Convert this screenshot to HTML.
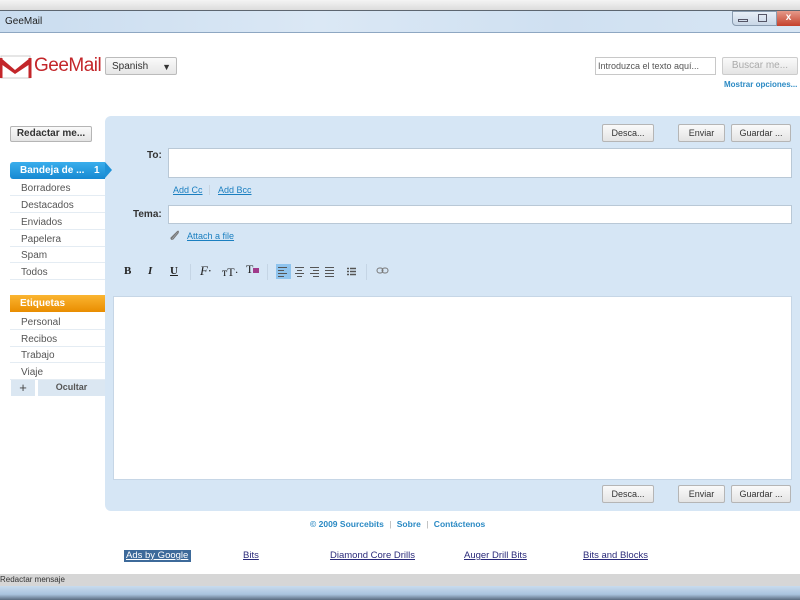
<!DOCTYPE html>
<html><head><meta charset="utf-8"><style>
*{margin:0;padding:0;box-sizing:border-box}
body{width:800px;height:600px;overflow:hidden;background:#fff;font-family:"Liberation Sans",sans-serif;font-size:10px;color:#333;position:relative}
.a{position:absolute}
.btn{position:absolute;border:1px solid #b5b5b5;border-radius:2px;background:linear-gradient(#fafafa,#e4e4e4);text-align:center;font-size:9px;color:#333;line-height:16px}
.nav{position:absolute;left:10px;width:95px;height:17px;border-bottom:1px solid #e4ecf3;padding-left:11px;line-height:19px;font-size:10px;color:#555}
.lnk{color:#1a7fc0;text-decoration:underline;font-size:9px}
.inp{position:absolute;background:#fff;border:1px solid #b9c8d6}
.tb{position:absolute;top:265px;font-size:11px;font-weight:bold;color:#222;font-family:"Liberation Serif",serif}
.ad{position:absolute;top:550px;color:#2a2a7a;text-decoration:underline;font-size:9.5px}
</style></head><body>
<div class="a" style="left:0;top:0;width:800px;height:10px;background:linear-gradient(#f4f4f4,#dcdcdc)"></div>
<div class="a" style="left:0;top:10px;width:800px;height:23px;background:linear-gradient(90deg,#c9dcef,#dbe8f5 40%,#cfe0f1 70%,#d8e6f4);border-top:1px solid #5d6670;border-bottom:1px solid #8ea7c2"></div>
<div class="a" style="left:5px;top:16px;font-size:10px;color:#222">GeeMail</div>
<div class="a" style="left:732px;top:11px;width:45px;height:15px;border:1px solid #8a9cb0;border-radius:0 0 0 4px;background:linear-gradient(#e8eff7,#c8d6e6)"></div>
<div class="a" style="left:738px;top:19px;width:10px;height:3px;border:1px solid #556"></div>
<div class="a" style="left:758px;top:14px;width:9px;height:8px;border:1px solid #556"></div>
<div class="a" style="left:777px;top:11px;width:23px;height:15px;background:linear-gradient(#e59a8a,#c4412c);color:#fff;font-size:10px;font-weight:bold;text-align:center;line-height:14px">x</div>
<svg class="a" style="left:0;top:50px" width="34" height="34" viewBox="0 0 34 34"><path d="M1 6 L30 6 L30 28 L1 28Z" fill="#fff" stroke="#ccc"/><path d="M1 8 L15 20 L30 8 L30 14 L15 24 L1 14Z" fill="#c3262a"/><path d="M1 8 V28 M30 8 V28" stroke="#c3262a" stroke-width="3"/></svg>
<div class="a" style="left:34px;top:55px;font-size:19px;color:#c3262a;letter-spacing:-0.5px">GeeMail</div>
<div class="a" style="left:105px;top:57px;width:72px;height:18px;border:1px solid #bbb;border-radius:2px;background:linear-gradient(#fafafa,#e6e6e6);font-size:10px;line-height:18px;padding-left:6px">Spanish<span style="position:absolute;right:5px;font-size:9px">▼</span></div>
<div class="inp" style="left:595px;top:57px;width:121px;height:18px;border-color:#c8c8c8;font-size:9px;color:#555;line-height:17px;padding-left:2px">Introduzca el texto aquí...</div>
<div class="btn" style="left:722px;top:57px;width:76px;height:18px;color:#aaa;font-size:10px;border-color:#ccc">Buscar me...</div>
<div class="a" style="left:724px;top:80px;font-size:8px;font-weight:bold;color:#2b8ac4">Mostrar opciones...</div>
<div class="a" style="left:105px;top:116px;width:700px;height:395px;background:#d6e6f5;border-radius:6px"></div>
<div class="btn" style="left:10px;top:126px;width:82px;height:16px;font-weight:bold;font-size:10px;line-height:14px">Redactar me...</div>
<div class="a" style="left:10px;top:162px;width:95px;height:17px;background:linear-gradient(#3aaeec,#1689d2);border-radius:3px 0 0 3px;color:#fff;font-weight:bold;font-size:10px;line-height:17px;padding-left:10px">Bandeja de ...<span style="position:absolute;left:84px">1</span></div>
<div class="a" style="left:105px;top:162px;width:0;height:0;border-top:8.5px solid transparent;border-bottom:8.5px solid transparent;border-left:7px solid #1f92d8"></div>
<div class="nav" style="top:179px">Borradores</div>
<div class="nav" style="top:196px">Destacados</div>
<div class="nav" style="top:213px">Enviados</div>
<div class="nav" style="top:230px">Papelera</div>
<div class="nav" style="top:246px">Spam</div>
<div class="nav" style="top:263px">Todos</div>
<div class="a" style="left:10px;top:295px;width:95px;height:17px;background:linear-gradient(#fbb531,#e98d00);color:#fff;font-weight:bold;font-size:10px;line-height:17px;padding-left:10px">Etiquetas</div>
<div class="nav" style="top:313px">Personal</div>
<div class="nav" style="top:330px">Recibos</div>
<div class="nav" style="top:346px">Trabajo</div>
<div class="nav" style="top:363px">Viaje</div>
<div class="a" style="left:11px;top:380px;width:24px;height:16px;background:#dbe7f2;text-align:center;font-size:13px;line-height:15px;color:#444">+</div>
<div class="a" style="left:38px;top:380px;width:67px;height:16px;background:#dbe7f2;text-align:center;font-size:9px;font-weight:bold;line-height:15px;color:#555">Ocultar</div>
<div class="btn" style="left:602px;top:124px;width:52px;height:18px">Desca...</div>
<div class="btn" style="left:678px;top:124px;width:47px;height:18px">Enviar</div>
<div class="btn" style="left:731px;top:124px;width:60px;height:18px">Guardar ...</div>
<div class="a" style="left:147px;top:150px;font-weight:bold;font-size:10px">To:</div>
<div class="inp" style="left:168px;top:148px;width:624px;height:30px"></div>
<div class="a lnk" style="left:173px;top:185px">Add Cc</div>
<div class="a" style="left:209px;top:185px;width:1px;height:10px;background:#c8d4e0"></div>
<div class="a lnk" style="left:218px;top:185px">Add Bcc</div>
<div class="a" style="left:133px;top:209px;font-weight:bold;font-size:10px">Tema:</div>
<div class="inp" style="left:168px;top:205px;width:624px;height:19px"></div>
<svg class="a" style="left:168px;top:229px" width="12" height="12"><path d="M3 10 L9 3 Q11 1 10 4 L5 10 Q3 11 3 9 L8 4" stroke="#777" fill="none" stroke-width="1.2"/></svg>
<div class="a lnk" style="left:187px;top:231px">Attach a file</div>
<div class="tb" style="left:124px">B</div>
<div class="tb" style="left:148px;font-style:italic">I</div>
<div class="tb" style="left:170px;text-decoration:underline">U</div>
<div class="a" style="left:190px;top:264px;width:1px;height:16px;background:#c5d5e5"></div>
<div class="tb" style="left:200px;font-style:italic;font-weight:normal;font-size:13px;top:263px">F·</div>
<div class="tb" style="left:222px;font-weight:normal;font-size:12px">тT·</div>
<div class="tb" style="left:246px;font-weight:normal;font-size:12px;top:262px">T<span style="display:inline-block;width:6px;height:5px;background:#a03a8a"></span></div>
<div class="a" style="left:267px;top:264px;width:1px;height:16px;background:#c5d5e5"></div>
<div class="a" style="left:276px;top:264px;width:15px;height:15px;background:#8fc4ee"></div>
<svg class="a" style="left:278px;top:266px" width="80" height="11"><g stroke="#555" stroke-width="1"><path d="M0 1.5h9M0 4.5h6M0 7.5h9M0 10.5h6"/><path d="M17 1.5h9M19 4.5h5M17 7.5h9M19 10.5h5"/><path d="M32 1.5h9M35 4.5h6M32 7.5h9M35 10.5h6"/><path d="M47 1.5h9M47 4.5h9M47 7.5h9M47 10.5h9"/><path d="M69 2.5h2M72 2.5h6M69 5.5h2M72 5.5h6M69 8.5h2M72 8.5h6" stroke-width="1.5"/></g></svg>
<div class="a" style="left:366px;top:264px;width:1px;height:16px;background:#c5d5e5"></div>
<svg class="a" style="left:376px;top:267px" width="14" height="8"><rect x="1" y="1" width="6" height="5" rx="2.5" fill="none" stroke="#777"/><rect x="6" y="1" width="6" height="5" rx="2.5" fill="none" stroke="#777"/></svg>
<div class="inp" style="left:113px;top:296px;width:679px;height:184px;border-color:#c6d6e6"></div>
<div class="btn" style="left:602px;top:485px;width:52px;height:18px">Desca...</div>
<div class="btn" style="left:678px;top:485px;width:47px;height:18px">Enviar</div>
<div class="btn" style="left:731px;top:485px;width:60px;height:18px">Guardar ...</div>
<div class="a" style="left:310px;top:519px;font-size:8.5px;font-weight:bold;color:#2b8ac4">© 2009 Sourcebits <span style="color:#aaa;font-weight:normal;margin:0 3px">|</span> Sobre <span style="color:#aaa;font-weight:normal;margin:0 3px">|</span> Contáctenos</div>
<div class="a" style="left:124px;top:550px;width:67px;background:#3d6a9a;color:#fff;text-decoration:underline;font-size:9.5px;padding:0 2px;line-height:12px">Ads by Google</div>
<div class="ad" style="left:243px">Bits</div>
<div class="ad" style="left:330px">Diamond Core Drills</div>
<div class="ad" style="left:464px">Auger Drill Bits</div>
<div class="ad" style="left:583px">Bits and Blocks</div>
<div class="a" style="left:0;top:574px;width:800px;height:12px;background:#d6d6d6;font-size:8px;color:#333;line-height:12px">Redactar mensaje</div>
<div class="a" style="left:0;top:586px;width:800px;height:14px;background:linear-gradient(#c8dbee,#a9c3de 60%,#5a6b80)"></div>
</body></html>
